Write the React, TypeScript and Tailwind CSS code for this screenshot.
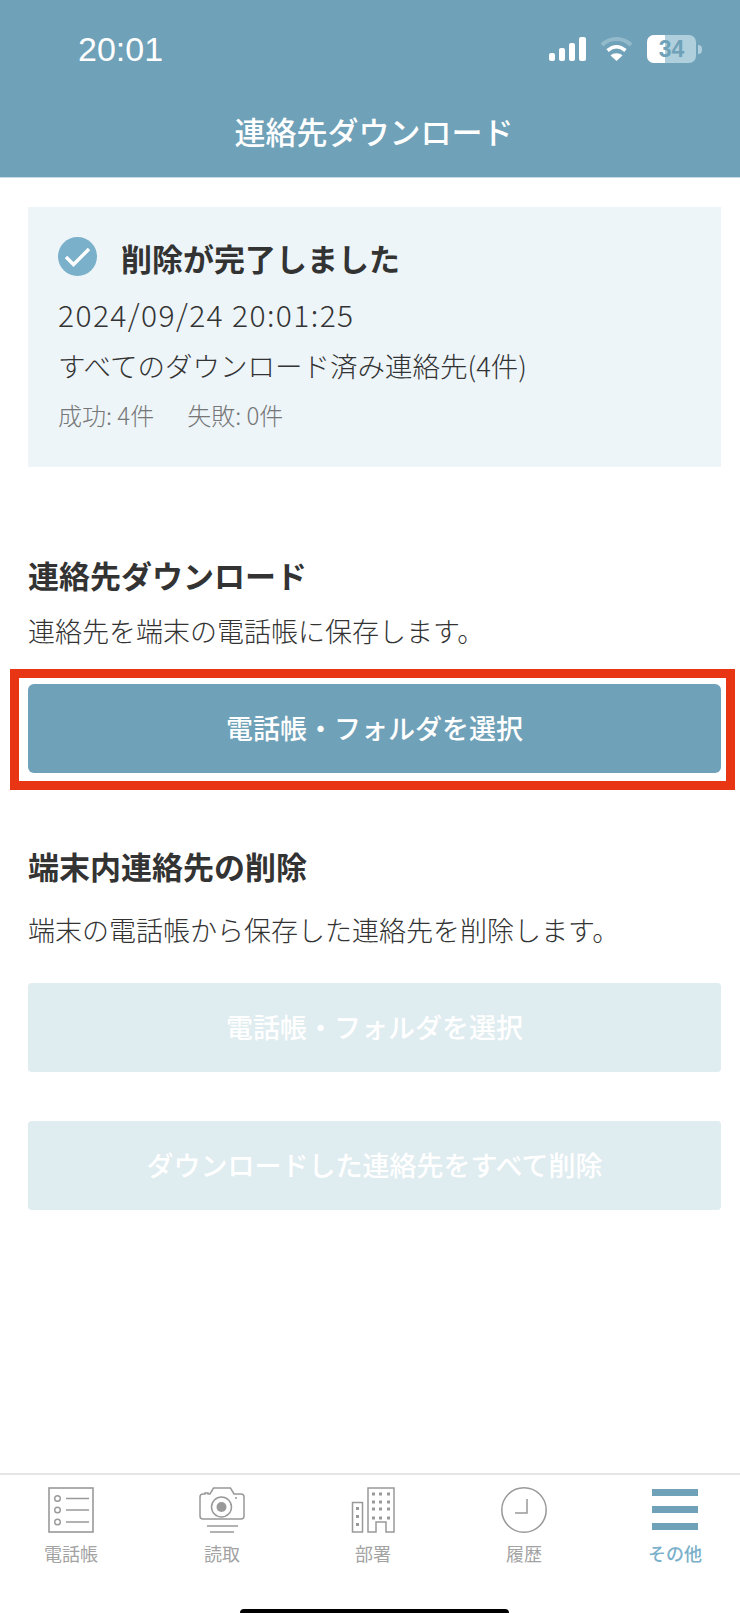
import React from 'react';

const jp = { fontFamily: '"Noto Sans CJK JP", sans-serif' };

function ListIcon() {
  return (
    <svg width="46" height="46" viewBox="0 0 46 46" fill="none" stroke="#999" strokeWidth="1.4">
      <rect x="1" y="1" width="44" height="44" strokeWidth="1.6" />
      <circle cx="9.5" cy="11.5" r="2.8" />
      <circle cx="9.5" cy="23" r="2.8" />
      <circle cx="9.5" cy="35" r="2.8" />
      <path d="M18 11.5h23M18 23h23M18 35h23" />
    </svg>
  );
}

function CameraIcon() {
  return (
    <svg width="46" height="46" viewBox="0 0 46 46" fill="none" stroke="#999" strokeWidth="1.5">
      <path d="M4 7h2V6h3v1h2L14.5 1h17L35 7h7q3 0 3 3v19q0 3-3 3H4q-3 0-3-3V10q0-3 3-3z" />
      <circle cx="22.5" cy="20" r="10" />
      <circle cx="22.5" cy="20" r="5" fill="#999" stroke="none" />
      <circle cx="37" cy="11" r="1" fill="#999" stroke="none" />
      <path d="M8 39h31M11 45h24" />
    </svg>
  );
}

function BuildingIcon() {
  const rows = [7, 15, 22, 31];
  return (
    <svg width="46" height="46" viewBox="0 0 46 46" fill="none" stroke="#999" strokeWidth="1.5">
      <rect x="2.5" y="15.5" width="10" height="29.5" />
      <path d="M18 45V1h26v44h-8V35H26v10z" />
      <g fill="#999" stroke="none">
        <rect x="6" y="20" width="3" height="3" />
        <rect x="6" y="28" width="3" height="3" />
        <rect x="6" y="36" width="3" height="3" />
        {rows.map((y) => (
          <React.Fragment key={y}>
            <rect x="22" y={y - 1.5} width="3" height="3" />
            <rect x="29" y={y - 1.5} width="3" height="3" />
            <rect x="37" y={y - 1.5} width="3" height="3" />
          </React.Fragment>
        ))}
      </g>
    </svg>
  );
}

function ClockIcon() {
  return (
    <svg width="46" height="46" viewBox="0 0 46 46" fill="none" stroke="#999" strokeWidth="1.5">
      <circle cx="23" cy="23" r="22.2" />
      <path d="M26 12v14H14" />
    </svg>
  );
}

function MenuIcon() {
  return (
    <svg width="46" height="46" viewBox="0 0 46 46" fill="#6fa1b8">
      <rect x="0" y="2" width="46" height="7" />
      <rect x="0" y="19" width="46" height="7" />
      <rect x="0" y="36" width="46" height="7" />
    </svg>
  );
}

function CheckCircle() {
  return (
    <svg width="39" height="39" viewBox="0 0 39 39">
      <circle cx="19.5" cy="19.5" r="19.5" fill="#7ab0ca" />
      <path d="M8 20l7.5 7.5L31 12" fill="none" stroke="#fff" strokeWidth="3.4" />
    </svg>
  );
}

function StatusIcons() {
  return (
    <div className="flex items-center">
      <div className="flex items-end gap-[4px] h-[24px]">
        <div className="w-[6px] h-[8px] bg-white rounded-[2px]" />
        <div className="w-[6px] h-[13px] bg-white rounded-[2px]" />
        <div className="w-[6px] h-[18px] bg-white rounded-[2px]" />
        <div className="w-[7px] h-[24px] bg-white rounded-[2px]" />
      </div>
      <svg className="ml-[14px]" width="33" height="24" viewBox="0 0 33 24" fill="none">
        <path d="M2 8C10 0 23 0 31 8" stroke="#93bacb" strokeWidth="4" />
        <path d="M7.5 13.5c6-5 12-5 18 0" stroke="#fff" strokeWidth="3.6" />
        <path d="M16.5 24l-6-5.5c3-3 9-3 12 0z" fill="#fff" />
      </svg>
      <div className="relative ml-[14px] w-[49px] h-[28px] rounded-[7px] bg-[#b0cfdc] overflow-hidden">
        <div className="w-[18px] h-full bg-white" />
        <span
          className="absolute inset-0 flex items-center justify-center text-[23px] font-bold text-[#6fa1b8]"
          style={{ fontFamily: '"Liberation Sans", sans-serif' }}
        >
          34
        </span>
      </div>
      <div className="ml-[2px] w-[4px] h-[9px] rounded-r-full bg-[#b0cfdc]" />
    </div>
  );
}

function Tab({ label, active, children }: { label: string; active?: boolean; children: React.ReactNode }) {
  return (
    <div className="w-[46px] flex flex-col items-center">
      {children}
      <span className={`mt-[6px] text-[18px] leading-[28px] whitespace-nowrap ${active ? 'text-[#7ab0ca] font-medium' : 'text-[#a3a3a3]'}`}>
        {label}
      </span>
    </div>
  );
}

export default function App() {
  return (
    <div className="w-[740px] h-[1613px] flex flex-col bg-white text-[#333]" style={jp}>
      {/* header */}
      <div className="h-[178px] bg-[#6fa1b8] border-b border-[#c5dae3] text-white">
        <div className="flex items-center justify-between pl-[78px] pr-[38px] pt-[30px] h-[68px]">
          <span className="text-[34px] leading-[38px]" style={{ fontFamily: '"Liberation Sans", sans-serif' }}>20:01</span>
          <StatusIcons />
        </div>
        <div className="mt-[43px] pl-[8px] text-center text-[31px] leading-[40px] font-medium">連絡先ダウンロード</div>
      </div>

      <main className="flex-1">
        {/* result card */}
        <div className="mt-[29px] ml-[28px] mr-[19px] h-[260px] bg-[#edf5f9] pl-[30px] pt-[29px]">
          <div className="flex items-center">
            <div className="mb-[4px]"><CheckCircle /></div>
            <span className="ml-[24px] text-[31px] leading-[44px] font-bold">削除が完了しました</span>
          </div>
          <div className="mt-[14px] text-[30px] leading-[40px] font-light tracking-[1.4px]">2024/09/24 20:01:25</div>
          <div className="mt-[11px] text-[27.5px] leading-[40px] font-light">すべてのダウンロード済み連絡先(4件)</div>
          <div className="mt-[14px] text-[24px] leading-[32px] font-light text-[#777] flex gap-[33px]">
            <span>成功: 4件</span>
            <span>失敗: 0件</span>
          </div>
        </div>

        {/* download */}
        <h2 className="mt-[88px] ml-[28px] text-[31px] leading-[40px] font-bold">連絡先ダウンロード</h2>
        <p className="mt-[16px] ml-[28px] text-[27px] leading-[40px] font-light">連絡先を端末の電話帳に保存します。</p>
        <div className="mt-[18px] ml-[10px] mr-[5px] border-[9px] border-[#e83513] pt-[6px] pb-[8px] pl-[9px] pr-[5px]">
          <button className="w-full h-[89px] rounded-[6px] bg-[#6fa1b8] text-white text-[27px] font-medium">電話帳・フォルダを選択</button>
        </div>

        {/* delete */}
        <h2 className="mt-[56px] ml-[28px] text-[31px] leading-[40px] font-bold">端末内連絡先の削除</h2>
        <p className="mt-[24px] ml-[28px] text-[27px] leading-[40px] font-light">端末の電話帳から保存した連絡先を削除します。</p>
        <button className="block mt-[33px] ml-[28px] w-[693px] h-[89px] rounded-[4px] bg-[#dfecf0] text-white text-[27px] font-medium">電話帳・フォルダを選択</button>
        <button className="block mt-[49px] ml-[28px] w-[693px] h-[89px] rounded-[4px] bg-[#dfecf0] text-white text-[27px] font-medium">ダウンロードした連絡先をすべて削除</button>
      </main>

      {/* tab bar */}
      <div className="h-[140px] border-t-2 border-[#e5e5e5] flex flex-col">
        <div className="flex justify-between pl-[48px] pr-[42px] pt-[12px]">
          <Tab label="電話帳"><ListIcon /></Tab>
          <Tab label="読取"><CameraIcon /></Tab>
          <Tab label="部署"><BuildingIcon /></Tab>
          <Tab label="履歴"><ClockIcon /></Tab>
          <Tab label="その他" active><MenuIcon /></Tab>
        </div>
        <div className="mt-auto ml-[240px] w-[269px] h-[4px] bg-black rounded-t-[6px]" />
      </div>
    </div>
  );
}
